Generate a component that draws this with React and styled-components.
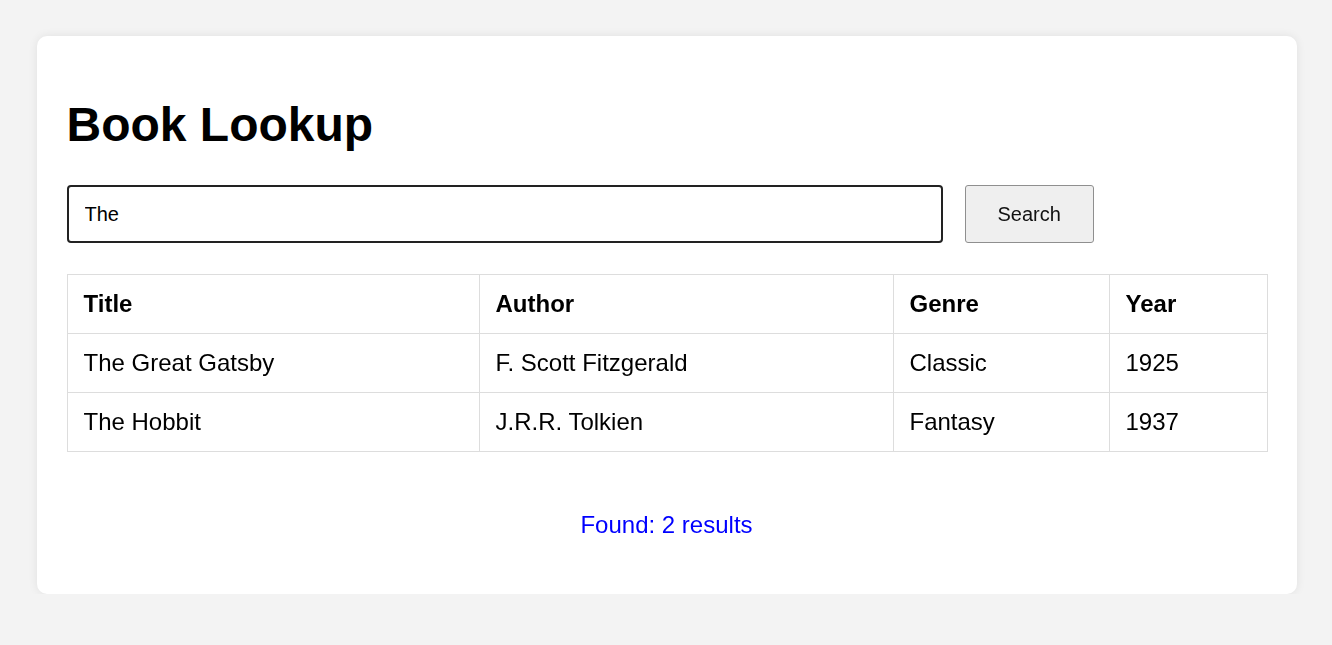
import React, { useState } from 'react'
import styled, { createGlobalStyle } from 'styled-components'

const books = [
    { title: 'The Great Gatsby', author: 'F. Scott Fitzgerald', genre: 'Classic', year: 1925 },
    { title: 'The Hobbit', author: 'J.R.R. Tolkien', genre: 'Fantasy', year: 1937 },
]

function App() {
    const [query, setQuery] = useState('The')
    const results = books.filter(b => b.title.toLowerCase().includes(query.toLowerCase()))

    return (
        <>
            <GlobalStyle />
            <Card>
                <Title>Book Lookup</Title>
                <SearchRow>
                    <SearchInput
                        autoFocus
                        value={query}
                        onChange={e => setQuery(e.target.value)}
                    />
                    <SearchButton>Search</SearchButton>
                </SearchRow>
                <Table>
                    <colgroup>
                        <Col width="412px" />
                        <Col width="414px" />
                        <Col width="216px" />
                        <Col width="158px" />
                    </colgroup>
                    <thead>
                        <tr>
                            <Th>Title</Th>
                            <Th>Author</Th>
                            <Th>Genre</Th>
                            <Th>Year</Th>
                        </tr>
                    </thead>
                    <tbody>
                        {results.map(b => (
                            <tr key={b.title}>
                                <Td>{b.title}</Td>
                                <Td>{b.author}</Td>
                                <Td>{b.genre}</Td>
                                <Td>{b.year}</Td>
                            </tr>
                        ))}
                    </tbody>
                </Table>
                <Status>Found: {results.length} results</Status>
            </Card>
        </>
    )
}

const GlobalStyle = createGlobalStyle`
    body {
        margin: 0;
        padding: 36px 0 0 1px;
        background: #f3f3f3;
        font-family: "Liberation Sans", Arial, sans-serif;
    }
`

const Card = styled.div`
    width: 1200px;
    margin: 0 auto;
    padding: 30px;
    background: #fff;
    border-radius: 10px;
    box-shadow: 0 0 10px rgba(0, 0, 0, 0.08);
`

const Title = styled.h1`
    font-size: 48px;
    font-weight: bold;
    color: #000;
    margin: 31px 0 33px;
`

const SearchRow = styled.div`
    display: flex;
    align-items: center;
    gap: 22px;
`

const SearchInput = styled.input`
    padding: 16px;
    font-size: 20px;
    line-height: 22px;
    height: 58px;
    box-sizing: border-box;
    width: 876px;
    font-family: "Liberation Sans", Arial, sans-serif;
    color: #000;
    border: 2px solid #222;
    border-radius: 4px;
    outline: none;
    caret-color: #000;
`

const SearchButton = styled.button`
    height: 58px;
    padding: 0 32px;
    font-size: 20px;
    line-height: 22px;
    font-family: "Liberation Sans", Arial, sans-serif;
    color: #111;
    background: #efefef;
    border: 1px solid #8f8f8f;
    border-radius: 3px;
`

const Table = styled.table`
    width: 100%;
    margin-top: 31px;
    border-collapse: collapse;
    table-layout: fixed;
    font-size: 24px;
`

const Col = styled.col`
    width: ${props => props.width};
`

const Th = styled.th`
    text-align: left;
    font-weight: bold;
    padding: 16px;
    line-height: 26px;
    border: 1px solid #ddd;
`

const Td = styled.td`
    padding: 16px;
    line-height: 26px;
    border: 1px solid #ddd;
`

const Status = styled.p`
    text-align: center;
    color: #0000ff;
    font-size: 24px;
    margin: 59px 0 25px;
`

export default App
